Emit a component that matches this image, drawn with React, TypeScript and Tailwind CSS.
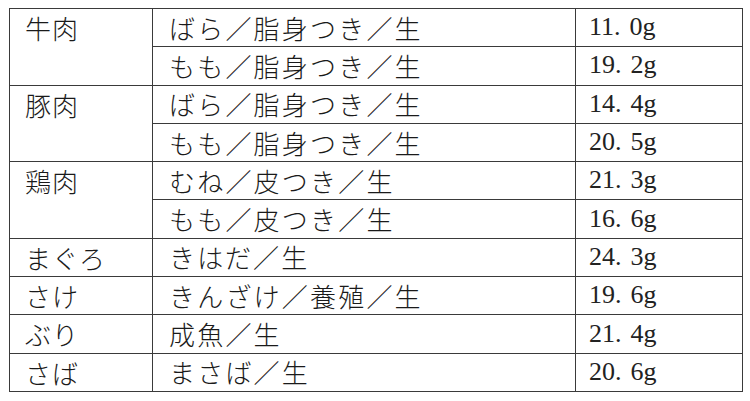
import React from "react";

type Row = { food: string; span?: number; part: string; amount: string };

const rows: Row[] = [
  { food: "牛肉", span: 2, part: "ばら／脂身つき／生", amount: "11.0g" },
  { food: "", span: 0, part: "もも／脂身つき／生", amount: "19.2g" },
  { food: "豚肉", span: 2, part: "ばら／脂身つき／生", amount: "14.4g" },
  { food: "", span: 0, part: "もも／脂身つき／生", amount: "20.5g" },
  { food: "鶏肉", span: 2, part: "むね／皮つき／生", amount: "21.3g" },
  { food: "", span: 0, part: "もも／皮つき／生", amount: "16.6g" },
  { food: "まぐろ", part: "きはだ／生", amount: "24.3g" },
  { food: "さけ", part: "きんざけ／養殖／生", amount: "19.6g" },
  { food: "ぶり", part: "成魚／生", amount: "21.4g" },
  { food: "さば", part: "まさば／生", amount: "20.6g" },
];

const cjk = "font-['Noto_Sans_CJK_JP',sans-serif]";

function Amount({ value }: { value: string }) {
  const [whole, rest] = value.split(".");
  return (
    <span className="font-['Liberation_Serif',serif] text-[26px] font-normal text-[#222]">
      {whole}
      <span className="pr-[9px]">.</span>
      {rest}
    </span>
  );
}

export default function App() {
  return (
    <div className="w-[750px] h-[401px] bg-white pt-[8px] pl-[9px]">
      <table className={`border-collapse w-[733px] table-fixed text-[#1a1a1a] ${cjk}`}>
        <colgroup>
          <col className="w-[143px]" />
          <col className="w-[423px]" />
          <col className="w-[167px]" />
        </colgroup>
        <tbody>
          {rows.map((r, i) => (
            <tr key={i} className="h-[38.3px]">
              {r.span !== 0 && (
                <td
                  rowSpan={r.span ?? 1}
                  className="border border-[#3a3a3a] align-top p-0 pl-[15px] pt-[1px] text-[26px] leading-[36px] font-light tracking-[1px]"
                >
                  {r.food}
                </td>
              )}
              <td className="border border-[#3a3a3a] p-0 pl-[16px] text-[26px] leading-[36px] tracking-[2.2px] font-light">
                {r.part}
              </td>
              <td className="border border-[#3a3a3a] p-0 pl-[13px] leading-[36px]">
                <Amount value={r.amount} />
              </td>
            </tr>
          ))}
        </tbody>
      </table>
    </div>
  );
}
